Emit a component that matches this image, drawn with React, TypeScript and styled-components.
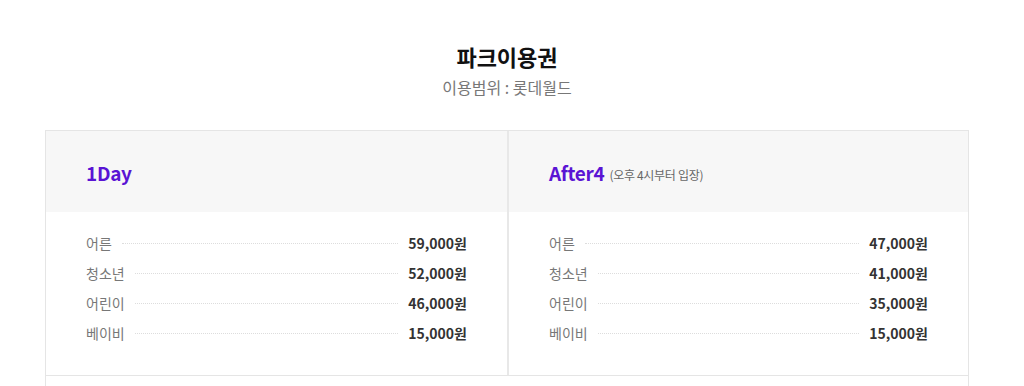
import styled, { createGlobalStyle } from "styled-components";

const GlobalStyle = createGlobalStyle`
  body {
    margin: 0;
    background: #fff;
    font-family: "Noto Sans CJK KR", "Noto Sans", sans-serif;
  }
`;

interface ITicket {
  name: string;
  note?: string;
  prices: { label: string; price: string }[];
}

const tickets: ITicket[] = [
  {
    name: "1Day",
    prices: [
      { label: "어른", price: "59,000원" },
      { label: "청소년", price: "52,000원" },
      { label: "어린이", price: "46,000원" },
      { label: "베이비", price: "15,000원" },
    ],
  },
  {
    name: "After4",
    note: "(오후 4시부터 입장)",
    prices: [
      { label: "어른", price: "47,000원" },
      { label: "청소년", price: "41,000원" },
      { label: "어린이", price: "35,000원" },
      { label: "베이비", price: "15,000원" },
    ],
  },
];

const App = () => {
  return (
    <>
      <GlobalStyle />
      <Page>
        <Title>파크이용권</Title>
        <SubTitle>이용범위 : 롯데월드</SubTitle>
        <Table>
          <Columns>
            {tickets.map((ticket) => (
              <Column key={ticket.name}>
                <Head>
                  <Name>{ticket.name}</Name>
                  {ticket.note && <Note>{ticket.note}</Note>}
                </Head>
                <Body>
                  {ticket.prices.map((p) => (
                    <PriceRow key={p.label}>
                      <Label>{p.label}</Label>
                      <Dots />
                      <Price>{p.price}</Price>
                    </PriceRow>
                  ))}
                </Body>
              </Column>
            ))}
          </Columns>
          <NextRow />
        </Table>
      </Page>
    </>
  );
};

export default App;

const Page = styled.div`
  width: 1014px;
  padding-top: 41px;
  display: flex;
  flex-direction: column;
  align-items: center;
`;

const Title = styled.h2`
  margin: 0;
  font-size: 22px;
  line-height: 30px;
  font-weight: 700;
  color: #111;
`;

const SubTitle = styled.p`
  margin: 4px 0 0;
  font-size: 16px;
  line-height: 24px;
  color: #777;
`;

const Table = styled.div`
  margin-top: 31px;
  width: 924px;
  box-sizing: border-box;
  border: 1px solid #e5e5e5;
  border-bottom: none;
`;

const Columns = styled.div`
  display: grid;
  grid-template-columns: 1fr 1fr;
  border-bottom: 1px solid #e5e5e5;
`;

const Column = styled.div`
  & + & {
    border-left: 2px solid #e8e8e8;
  }
`;

const Head = styled.div`
  height: 81px;
  background: #f7f7f7;
  padding: 2px 40px 0;
  box-sizing: border-box;
  display: flex;
  align-items: center;
  gap: 5px;
`;

const Name = styled.span`
  font-size: 19px;
  font-weight: 700;
  color: #5a14d4;
  letter-spacing: -0.3px;
`;

const Note = styled.span`
  font-size: 12px;
  color: #666;
  margin-top: 3px;
  letter-spacing: -0.3px;
`;

const Body = styled.div`
  padding: 16px 40px 27px;
`;

const PriceRow = styled.div`
  display: flex;
  align-items: center;
  height: 30px;
`;

const Label = styled.span`
  font-size: 14px;
  color: #777;
`;

const Dots = styled.span`
  flex: 1;
  margin: 0 10px;
  border-top: 1px dotted #ddd;
`;

const Price = styled.span`
  font-size: 14px;
  font-weight: 700;
  color: #333;
`;

const NextRow = styled.div`
  height: 20px;
`;
